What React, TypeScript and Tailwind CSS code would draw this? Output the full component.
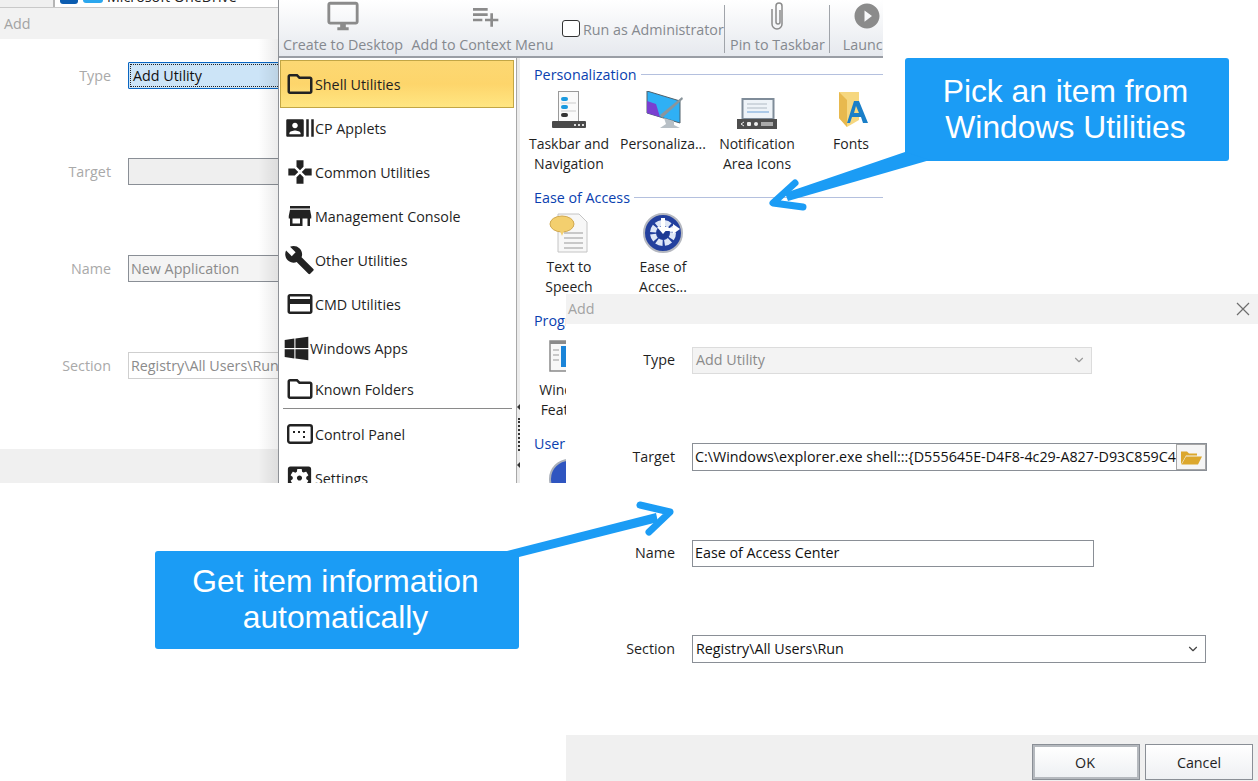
import React from "react";
import {
  MdBuild,
  MdCreditCard,
  MdGames,
  MdOutlineDesktopWindows,
  MdOutlineFolder,
  MdPlayCircleFilled,
  MdPlaylistAdd,
  MdRecentActors,
  MdSettingsApplications,
  MdStore,
} from "react-icons/md";
import { FaWindows } from "react-icons/fa";
import { FiChevronDown } from "react-icons/fi";

function ControlPanelIcon() {
  return (
    <svg width="26" height="20" viewBox="0 0 26 20">
      <rect x="1.200" y="1.200" width="23.600" height="17.600" rx="2" fill="none" stroke="#222" strokeWidth="2.400" />
      <rect x="6" y="7" width="2" height="2" fill="#222" />
      <rect x="11" y="7" width="2" height="2" fill="#222" />
      <rect x="16" y="7" width="2" height="2" fill="#222" />
      <rect x="16" y="12" width="2" height="2" fill="#222" />
    </svg>
  );
}

function PaperclipIcon() {
  return (
    <svg width="16" height="30" viewBox="0 0 16 30">
      <path
        d="M10 9V21a2 2 0 0 1-4 0V5a3 3 0 0 1 6 0V23a5 5 0 0 1-10 0V8"
        fill="none"
        stroke="#8b8b8b"
        strokeWidth="1.500"
      />
    </svg>
  );
}

function TaskbarIcon() {
  return (
    <svg width="36" height="38" viewBox="0 0 36 38">
      <rect x="7.500" y="0.500" width="20" height="30" fill="#fafafa" stroke="#9a9a9a" />
      <rect x="10" y="6" width="7" height="4" rx="2" fill="#1b9ae0" />
      <rect x="10" y="14" width="7" height="4" rx="2" fill="#1b9ae0" />
      <rect x="10" y="22" width="7" height="4" rx="2" fill="#333" />
      <line x1="10" y1="12" x2="25" y2="12" stroke="#ccc" />
      <line x1="10" y1="20" x2="25" y2="20" stroke="#ccc" />
      <rect x="1" y="30" width="34" height="7" rx="1" fill="#4a4a4a" />
      <rect x="23" y="33" width="2" height="2" fill="#ddd" />
      <rect x="27" y="33" width="2" height="2" fill="#ddd" />
      <rect x="31" y="33" width="2" height="2" fill="#ddd" />
    </svg>
  );
}

function PersonalizeIcon() {
  return (
    <svg width="38" height="38" viewBox="0 0 38 38" className="ml-[3px]">
      <polygon points="1,0 34,10 34,32 1,22" fill="#2fb0f5" stroke="#50606a" />
      <polygon points="1,10 10,13 14,26 1,22" fill="#7a3fd0" />
      <polygon points="14,24 36,6 37,8 16,27" fill="#8a959c" />
      <polygon points="18,27 28,30 28,34 34,37 14,37 20,33" fill="#b8c0c6" />
    </svg>
  );
}

function NotificationIcon() {
  return (
    <svg width="42" height="32" viewBox="0 0 42 32" className="mt-[8px]">
      <rect x="6.500" y="1" width="31" height="20" fill="#eef3f8" stroke="#7f8c99" strokeWidth="2" />
      <line x1="11" y1="6" x2="31" y2="6" stroke="#b0bac4" />
      <line x1="11" y1="10" x2="31" y2="10" stroke="#b0bac4" />
      <line x1="11" y1="14" x2="33" y2="14" stroke="#6aa0d8" />
      <rect x="1" y="21" width="40" height="10" fill="#4e4e4e" />
      <polyline points="8,24 5,26 8,28" fill="none" stroke="#eee" />
      <rect x="11" y="24" width="4" height="4" rx="1" fill="#eee" />
      <rect x="18" y="24" width="4" height="4" rx="2" fill="#eee" />
      <rect x="25" y="24" width="12" height="4" fill="#aaa" />
    </svg>
  );
}

function FontsIcon() {
  return (
    <svg width="32" height="36" viewBox="0 0 32 36" className="ml-[3px]">
      <polygon points="2,0 22,0 22,28 10,35 2,26" fill="#f6d77f" />
      <polygon points="2,0 10,8 10,35 2,26" fill="#e8b94e" />
      <polygon points="17,9 22,9 31,31 26,31 24,25 15,25 13,31 10,31" fill="#1a7fc8" />
      <polygon points="19,14 17,21 22,21" fill="#f6d77f" />
    </svg>
  );
}

function SpeechIcon() {
  return (
    <svg width="40" height="40" viewBox="0 0 40 40">
      <polygon points="9,1 30,1 38,9 38,39 9,39" fill="#f7f7f7" stroke="#c4c4c4" />
      <line x1="15" y1="20" x2="34" y2="20" stroke="#999" />
      <line x1="15" y1="25" x2="34" y2="25" stroke="#999" />
      <line x1="15" y1="30" x2="34" y2="30" stroke="#999" />
      <line x1="15" y1="35" x2="34" y2="35" stroke="#999" />
      <ellipse cx="13" cy="11" rx="12" ry="8" fill="#f3cf6e" stroke="#d0a850" />
      <polygon points="11,18 15,18 13,23" fill="#f3cf6e" />
    </svg>
  );
}

function AccessIcon() {
  return (
    <svg width="40" height="40" viewBox="0 0 40 40">
      <circle cx="20" cy="20" r="19" fill="#23409e" stroke="#b5b8c0" strokeWidth="2" />
      <circle cx="20" cy="20" r="10" fill="none" stroke="#dfe7f7" strokeWidth="6" strokeDasharray="6 2" />
      <circle cx="20" cy="20" r="6" fill="#1e3a94" />
      <rect x="18" y="5" width="4" height="13" fill="#fff" />
      <polygon points="14,14 26,14 20,21" fill="#fff" />
      <rect x="20" y="15" width="12" height="3" fill="#fff" />
      <polygon points="30,11 37,16 30,21" fill="#fff" />
    </svg>
  );
}

function FeaturesIcon() {
  return (
    <svg width="40" height="32" viewBox="0 0 40 32">
      <rect x="1" y="1" width="38" height="30" fill="#f8f8f8" stroke="#8a8a8a" strokeWidth="1.500" />
      <rect x="1" y="1" width="38" height="3" fill="#8a8a8a" />
      <line x1="4" y1="10" x2="10" y2="10" stroke="#999" />
      <line x1="4" y1="15" x2="10" y2="15" stroke="#999" />
      <line x1="4" y1="20" x2="10" y2="20" stroke="#999" />
      <rect x="12" y="6" width="24" height="21" fill="#1a84d8" />
    </svg>
  );
}

function UserIcon() {
  return (
    <svg width="40" height="40" viewBox="0 0 40 40">
      <circle cx="20" cy="20" r="19" fill="#2f55c0" stroke="#aab0ba" strokeWidth="2" />
    </svg>
  );
}

function FolderOpenIcon() {
  return (
    <svg width="22" height="17" viewBox="0 0 22 16">
      <path d="M1 15V2h6l2 2h8v2H6L1 15z" fill="#dca72c" />
      <path d="M6 7h16l-4 8H1.500z" fill="#dca72c" />
    </svg>
  );
}

const menuItems = [
  { icon: <MdOutlineFolder size={30} />, label: "Shell Utilities", selected: true },
  { icon: <MdRecentActors size={30} />, label: "CP Applets" },
  { icon: <MdGames size={28} />, label: "Common Utilities" },
  { icon: <MdStore size={30} />, label: "Management Console" },
  { icon: <MdBuild size={32} />, label: "Other Utilities" },
  { icon: <MdCreditCard size={30} />, label: "CMD Utilities" },
  { icon: <FaWindows size={27} />, label: "Windows Apps", tight: true },
];

function MenuRow({ icon, label, selected, tight, height = "h-[44px]" }: any) {
  return (
    <div
      className={`flex items-center ${
        selected
          ? "h-[48px] -my-[2px] ml-px mr-[2px] border border-[#c2a645] bg-gradient-to-b from-[#fcd873] via-[#fdd56b] to-[#ffe682]"
          : `${height} mx-px border border-transparent`
      }`}
    >
      <div className={`flex justify-center text-[#222] ${tight ? "w-[29px] pl-[1px]" : "w-[34px] pl-[3px]"}`}>
        {icon}
      </div>
      <span className="pt-[2px] text-[#1f1f1f] whitespace-nowrap">{label}</span>
    </div>
  );
}

function GroupHeader({ title }: any) {
  return (
    <div className="h-[22px] flex items-center pl-[14px] text-[#0a3fb0]">
      <span className="pt-[2px] whitespace-nowrap">{title}</span>
      <div className="flex-1 h-px bg-[#b4c0de] ml-[4px]"></div>
    </div>
  );
}

function GridItem({ icon, lines }: any) {
  return (
    <div className="w-[94px] h-[101px] flex flex-col items-center shrink-0 text-[14px]">
      <div className="h-[49px] flex items-center justify-center">{icon}</div>
      {lines.map((l: string) => (
        <div key={l} className="h-[20px] leading-[20px] text-[#1f1f1f] whitespace-nowrap">
          {l}
        </div>
      ))}
    </div>
  );
}

function ToolButton({ icon, label, className }: any) {
  return (
    <div className={`flex flex-col items-center shrink-0 text-[#85898f] ${className}`}>
      <div className="h-[32px] flex items-center justify-center text-[#8b8b8b]">{icon}</div>
      <span className="whitespace-nowrap leading-[20px] mt-[3px]">{label}</span>
    </div>
  );
}

function BackRow({ label, className, children }: any) {
  return (
    <div className={`flex items-center ${className}`}>
      <div className="w-[111px] text-right text-[#a9a9a9]">{label}</div>
      <div className="ml-[17px] flex-1">{children}</div>
    </div>
  );
}

function FormRow({ label, className = "mb-[68px]", children }: any) {
  return (
    <div className={`flex items-center h-[28px] ${className}`}>
      <div className="w-[109px] text-right text-[#1f1f1f]">{label}</div>
      <div className="ml-[17px]">{children}</div>
    </div>
  );
}

export default function App() {
  return (
    <div className="relative w-[1258px] h-[781px] overflow-hidden bg-white font-['Open_Sans',sans-serif] text-[14.3px]">
      {/* window behind */}
      <div className="absolute left-0 top-0 w-[320px] h-[483px] flex flex-col bg-white">
        <div className="h-[8px] flex border-b border-[#c9c9c9] overflow-hidden shrink-0">
          <div className="w-[55px] bg-[#f0f0f0] border-r-2 border-[#b5b5b5]"></div>
          <div className="w-[5px]"></div>
          <div className="w-[18px] h-[4px] bg-[#0b5cb0] rounded-b-[3px]"></div>
          <div className="w-[20px] h-[3px] ml-[5px] bg-[#2ba7ee] rounded-b-[3px]"></div>
          <div className="ml-[4px] -mt-[13px] leading-[20px] text-[#222] whitespace-nowrap">Microsoft OneDrive</div>
        </div>
        <div className="h-[31px] flex items-center pl-[4px] bg-[#f2f2f2] text-[#a3a3a3] shrink-0">Add</div>
        <div className="flex-1 pt-[23px]">
          <BackRow label="Type" className="h-[27px]">
            <div className="h-[27px] border border-[#0a66c2] rounded-[1px] bg-[#cce4f7] p-px">
              <div className="h-full border border-dotted border-[#222] pl-[2px] flex items-center text-[#111]">
                Add Utility
              </div>
            </div>
          </BackRow>
          <BackRow label="Target" className="h-[27px] mt-[69px]">
            <div className="h-[27px] border border-[#8a8f96] bg-[#efefef]"></div>
          </BackRow>
          <BackRow label="Name" className="h-[27px] mt-[70px]">
            <div className="h-[27px] border border-[#8a8f96] bg-[#f4f4f4] pl-[2px] flex items-center text-[#8b8b8b] whitespace-nowrap">
              New Application
            </div>
          </BackRow>
          <BackRow label="Section" className="h-[27px] mt-[70px]">
            <div className="h-[27px] border border-[#cfcfcf] pl-[2px] flex items-center text-[#8b8b8b] whitespace-nowrap overflow-hidden">
              Registry\All Users\Run
            </div>
          </BackRow>
        </div>
        <div className="h-[34px] bg-[#f0f0f0] shrink-0"></div>
        <div className="absolute left-[258px] top-[39px] w-[20px] h-[444px] bg-gradient-to-r from-transparent to-[#00000014]"></div>
      </div>

      {/* utilities picker */}
      <div className="absolute left-[278px] top-0 w-[605px] h-[483px] flex flex-col bg-white border-l border-[#8e9196] overflow-hidden">
        <div className="h-[58px] shrink-0 flex bg-gradient-to-b from-white to-[#e6e9ee] border-b-2 border-[#9a9ea5]">
          <ToolButton icon={<MdOutlineDesktopWindows size={34} />} label="Create to Desktop" className="w-[120px] ml-[4px]" />
          <ToolButton icon={<MdPlaylistAdd size={32} className="ml-[4px]" />} label="Add to Context Menu" className="w-[143px] ml-[8px]" />
          <div className="flex items-center shrink-0 ml-[8px] h-[57px] text-[#85898f]">
            <div className="w-[18px] h-[17px] border border-[#333] rounded-[3px] bg-white"></div>
            <span className="ml-[3px] mt-[2px] whitespace-nowrap w-[140px]">Run as Administrator</span>
          </div>
          <div className="w-px h-[48px] mt-[5px] bg-[#a0a4aa] ml-[1px] shrink-0"></div>
          <ToolButton icon={<PaperclipIcon />} label="Pin to Taskbar" className="w-[95px] ml-[5px]" />
          <div className="w-px h-[48px] mt-[5px] bg-[#a0a4aa] ml-[4px] shrink-0"></div>
          <ToolButton icon={<MdPlayCircleFilled size={30} />} label="Launch" className="w-[50px] ml-[12px]" />
        </div>

        <div className="flex-1 flex min-h-0">
          <div className="w-[237px] shrink-0 pt-[4px] overflow-hidden">
            {menuItems.map((item) => (
              <MenuRow key={item.label} {...item} />
            ))}
            <MenuRow icon={<MdOutlineFolder size={30} />} label="Known Folders" height="h-[38px]" />
            <div className="h-px bg-[#8a8a8a] mx-[4px]"></div>
            <div className="h-[3px]"></div>
            <MenuRow icon={<ControlPanelIcon />} label="Control Panel" />
            <MenuRow icon={<MdSettingsApplications size={32} />} label="Settings" />
          </div>
          <div className="w-[4px] shrink-0 bg-[#ececec] border-l border-[#a8a8a8] flex flex-col items-center pt-[346px]">
            <div className="w-0 h-0 border-y-[3px] border-y-transparent border-r-[3px] border-r-[#333]"></div>
            <div className="h-[33px] mt-[8px] border-l-2 border-dotted border-[#333]"></div>
            <div className="w-0 h-0 mt-[11px] border-y-[3px] border-y-transparent border-r-[3px] border-r-[#333]"></div>
          </div>
          <div className="flex-1 pt-[5px] min-w-0 overflow-hidden">
            <GroupHeader title="Personalization" />
            <div className="flex pl-[2px]">
              <GridItem icon={<TaskbarIcon />} lines={["Taskbar and", "Navigation"]} />
              <GridItem icon={<PersonalizeIcon />} lines={["Personaliza..."]} />
              <GridItem icon={<NotificationIcon />} lines={["Notification", "Area Icons"]} />
              <GridItem icon={<FontsIcon />} lines={["Fonts"]} />
            </div>
            <GroupHeader title="Ease of Access" />
            <div className="flex pl-[2px]">
              <GridItem icon={<SpeechIcon />} lines={["Text to", "Speech"]} />
              <GridItem icon={<AccessIcon />} lines={["Ease of", "Acces..."]} />
            </div>
            <GroupHeader title="Programs" />
            <div className="flex pl-[2px]">
              <GridItem icon={<FeaturesIcon />} lines={["Windows", "Features"]} />
            </div>
            <GroupHeader title="User Accounts" />
            <div className="flex pl-[2px]">
              <GridItem icon={<UserIcon />} lines={[]} />
            </div>
          </div>
        </div>
      </div>

      {/* front dialog */}
      <div className="absolute left-[566px] top-[294px] w-[692px] h-[487px] flex flex-col bg-white">
        <div className="h-[30px] pb-[1px] flex items-center justify-between pl-[2px] pr-[8px] bg-[#f2f2f2] text-[#a3a3a3] shrink-0">
          <span>Add</span>
          <svg width="14" height="14" viewBox="0 0 14 14">
            <path d="M1 1l12 12M13 1L1 13" stroke="#6e6e6e" strokeWidth="1.200" />
          </svg>
        </div>
        <div className="flex-1 pt-[22px]">
          <FormRow label="Type" className="mb-[69px]">
            <div className="w-[400px] h-[27px] border border-[#dcdcdc] bg-[#f3f3f3] pl-[3px] pr-[5px] flex items-center justify-between text-[#8b8b8b]">
              Add Utility
              <FiChevronDown size={14} className="text-[#9a9a9a]" />
            </div>
          </FormRow>
          <FormRow label="Target">
            <div className="w-[515px] h-[28px] border border-[#8a8f96] pl-[2px] flex items-center justify-between overflow-hidden">
              <span className="text-[#111] whitespace-nowrap w-[481px] overflow-hidden">
                C:\Windows\explorer.exe shell:::{"{"}D555645E-D4F8-4c29-A827-D93C859C4
              </span>
              <div className="w-[30px] h-[26px] shrink-0 border border-[#a5a5a5] bg-[#f5f5f5] flex items-center justify-center">
                <FolderOpenIcon />
              </div>
            </div>
          </FormRow>
          <FormRow label="Name">
            <div className="w-[402px] h-[27px] border border-[#8a8f96] pl-[2px] flex items-center text-[#111]">
              Ease of Access Center
            </div>
          </FormRow>
          <FormRow label="Section">
            <div className="w-[514px] h-[28px] border border-[#8a8f96] pl-[3px] pr-[5px] flex items-center justify-between text-[#111]">
              Registry\All Users\Run
              <FiChevronDown size={14} className="text-[#444]" />
            </div>
          </FormRow>
        </div>
        <div className="h-[46px] bg-[#f0f0f0] shrink-0 flex items-start justify-end pt-[9px] pr-[5px] gap-[5px]">
          <button className="w-[108px] h-[36px] pt-[1px] pr-[2px] border-[3px] border-[#b5b9be] outline outline-1 -outline-offset-1 outline-[#8a8f96] bg-gradient-to-b from-white to-[#eef0f3] text-[#1f1f1f]">
            OK
          </button>
          <button className="w-[108px] h-[36px] pt-[1px] border border-[#8a8f96] bg-gradient-to-b from-white to-[#eef0f3] text-[#1f1f1f]">
            Cancel
          </button>
        </div>
      </div>

      {/* callouts */}
      <div className="absolute left-[905px] top-[58px] w-[324px] h-[103px] pb-[2px] pr-[3px] rounded-[3px] bg-[#1b9cf5] flex items-center justify-center text-center text-white text-[31.8px] leading-[36px] font-['Liberation_Sans',sans-serif]">
        Pick an item from
        <br />
        Windows Utilities
      </div>
      <div className="absolute left-[155px] top-[551px] w-[364px] h-[98px] pb-[2px] pr-[3px] rounded-[3px] bg-[#1b9cf5] flex items-center justify-center text-center text-white text-[31.8px] leading-[36px] font-['Liberation_Sans',sans-serif]">
        Get item information
        <br />
        automatically
      </div>

      <svg className="absolute left-0 top-0 pointer-events-none" width="1258" height="781" viewBox="0 0 1258 781">
        <polygon points="905,152 930,160 788,201 785,193" fill="#1b9cf5" />
        <polyline
          points="795,183 773,203 803,207"
          fill="none"
          stroke="#1b9cf5"
          strokeWidth="7"
          strokeLinecap="round"
          strokeLinejoin="round"
        />
        <polygon points="503,552 519,557 658,522 656,513" fill="#1b9cf5" />
        <polyline
          points="640,505 670,512 649,532"
          fill="none"
          stroke="#1b9cf5"
          strokeWidth="7"
          strokeLinecap="round"
          strokeLinejoin="round"
        />
      </svg>
    </div>
  );
}
